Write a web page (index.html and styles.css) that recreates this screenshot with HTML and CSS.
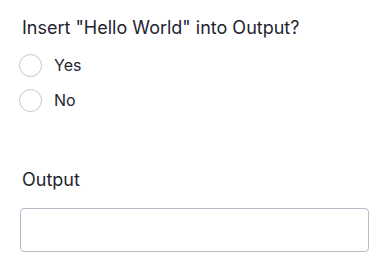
FILE: index.html
```html
<!DOCTYPE html>
<html>
<head>
<meta charset="utf-8">
<link rel="stylesheet" href="styles.css">
</head>
<body>
<div class="form">
  <fieldset class="group">
    <legend class="question">Insert "Hello World" into Output?</legend>
    <label class="option"><span class="radio"></span><span class="opt-text">Yes</span></label>
    <label class="option"><span class="radio"></span><span class="opt-text">No</span></label>
  </fieldset>
  <div class="field">
    <div class="field-label">Output</div>
    <div class="input"></div>
  </div>
</div>
</body>
</html>
```

FILE: styles.css
```css
html, body {
  margin: 0;
  padding: 0;
  background: #ffffff;
}
body {
  font-family: Inter, "Noto Sans", sans-serif;
  color: #1f2430;
}
.form {
  padding: 16px 20px 0 20px;
  display: flex;
  flex-direction: column;
}
.group {
  border: 0;
  margin: 0;
  padding: 0;
  display: flex;
  flex-direction: column;
  gap: 11px;
}
.question {
  float: left;
  padding: 0 0 0 2px;
  font-size: 18px;
  line-height: 24px;
  margin-bottom: 2px;
}
.option {
  display: flex;
  align-items: center;
  gap: 12px;
  height: 24px;
}
.radio {
  width: 23px;
  height: 23px;
  margin-left: -1px;
  border: 1px solid #c5c6d1;
  border-radius: 50%;
  box-sizing: border-box;
  flex: none;
}
.opt-text {
  font-size: 16px;
  line-height: 20px;
}
.field {
  margin-top: 56px;
  display: flex;
  flex-direction: column;
}
.field-label {
  padding-left: 2px;
  font-size: 18px;
  line-height: 24px;
  margin-bottom: 16px;
}
.input {
  height: 44px;
  width: 349px;
  box-sizing: border-box;
  border: 1px solid #b9bbcb;
  border-radius: 4px;
}
```
